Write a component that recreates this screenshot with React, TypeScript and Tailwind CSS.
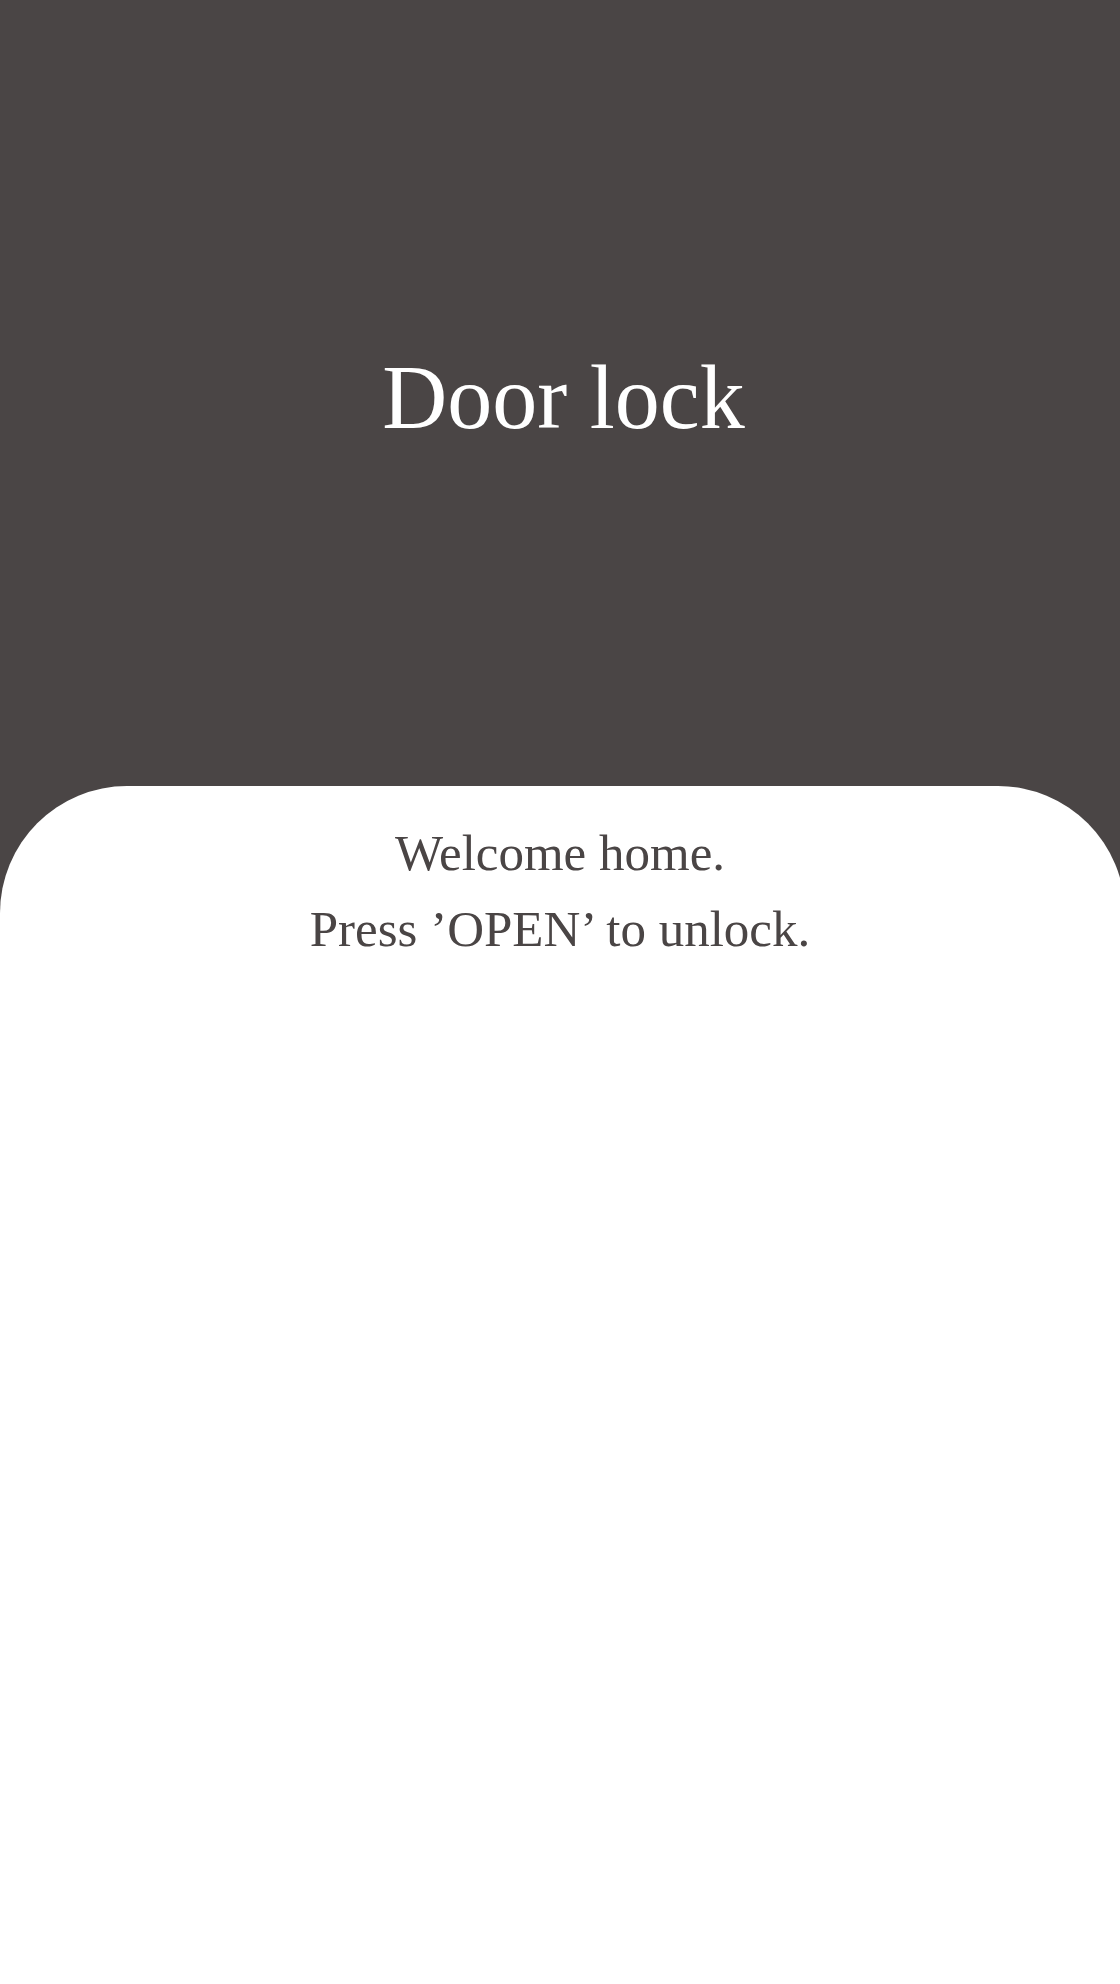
const App = () => {
    return (
        <div className="w-full h-[1984px] flex flex-col overflow-hidden bg-[#4a4545]">
            <header className="h-[786px] shrink-0 flex items-center justify-center pt-[10px]">
                <h1 className="text-[90px] leading-[90px] text-white font-['Liberation_Serif',serif] ml-[7px]">
                    Door lock
                </h1>
            </header>
            <main className="flex-1 w-[calc(100%+5px)] bg-white rounded-t-[127px] pt-[29px]">
                <p className="text-center text-[51px] leading-[76px] text-[#4a4545] font-['Liberation_Serif',serif] pr-[5px]">
                    Welcome home.
                    <br />
                    Press ’OPEN’ to unlock.
                </p>
            </main>
        </div>
    )
}

export default App;
